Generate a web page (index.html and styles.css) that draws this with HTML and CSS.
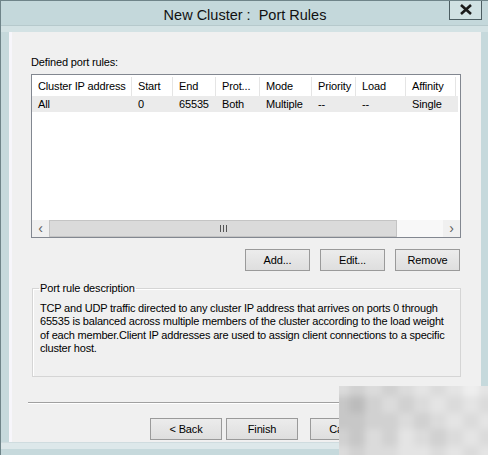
FILE: index.html
```html
<!DOCTYPE html>
<html lang="en">
<head>
  <meta charset="UTF-8">
  <title>New Cluster : Port Rules</title>
  <link rel="stylesheet" href="styles.css">
</head>
<body>
  <div class="window">
    <div class="titlebar">
      <div class="title">New Cluster :&nbsp; Port Rules</div>
      <div class="close">
        <svg width="14" height="11" viewBox="0 0 14 11"><path d="M2 1 L12 10 M12 1 L2 10" stroke="#1a1a1a" stroke-width="2.6"/></svg>
      </div>
    </div>
    <div class="band"></div>

    <div class="client">
      <div class="label">Defined port rules:</div>

      <div class="listview">
        <div class="lv-head">
          <div class="cell">Cluster IP address</div>
          <div class="cell">Start</div>
          <div class="cell">End</div>
          <div class="cell">Prot...</div>
          <div class="cell">Mode</div>
          <div class="cell">Priority</div>
          <div class="cell">Load</div>
          <div class="cell">Affinity</div>
        </div>
        <div class="lv-row selected">
          <div class="cell">All</div>
          <div class="cell">0</div>
          <div class="cell">65535</div>
          <div class="cell">Both</div>
          <div class="cell">Multiple</div>
          <div class="cell">--</div>
          <div class="cell">--</div>
          <div class="cell">Single</div>
        </div>
        <div class="lv-fill"></div>
        <div class="hscroll">
          <div class="arrow">&lsaquo;</div>
          <div class="thumb">
            <svg width="7" height="7" viewBox="0 0 7 7"><path d="M0.5 0 V7 M3.5 0 V7 M6.5 0 V7" stroke="#555" stroke-width="1"/></svg>
          </div>
          <div class="track"></div>
          <div class="arrow">&rsaquo;</div>
        </div>
      </div>

      <div class="btn-row">
        <button class="btn">Add...</button>
        <button class="btn">Edit...</button>
        <button class="btn">Remove</button>
      </div>

      <fieldset class="group">
        <legend>Port rule description</legend>
        <p class="desc">TCP and UDP traffic directed to any cluster IP address that arrives on ports 0 through<br>
        65535 is balanced across multiple members of the cluster according to the load weight<br>
        of each member.Client IP addresses are used to assign client connections to a specific<br>
        cluster host.</p>
      </fieldset>

      <div class="separator"></div>

      <div class="wizard-btns">
        <button class="btn wide">&lt; Back</button>
        <button class="btn wide">Finish</button>
        <button class="btn wide cancel">Cancel</button>
      </div>
    </div>
    <div class="bottom-band"></div>

    <!-- blurred stamp in the corner -->
    <div class="watermark">
      <div class="wm-grid">
        <i class="s4"></i><i class="s3"></i><i class="s4"></i><i class="s3"></i><i class="s4"></i><i class="s5"></i><i class="s4"></i><i class="s5"></i><i class="s6"></i><i class="s5"></i>
        <i class="s2"></i><i class="s1"></i><i class="s3"></i><i class="s4"></i><i class="s3"></i><i class="s4"></i><i class="s5"></i><i class="s4"></i><i class="s5"></i><i class="s4"></i>
        <i class="s2"></i><i class="s2"></i><i class="s3"></i><i class="s3"></i><i class="s4"></i><i class="s3"></i><i class="s4"></i><i class="s5"></i><i class="s4"></i><i class="s5"></i>
        <i class="s3"></i><i class="s2"></i><i class="s4"></i><i class="s3"></i><i class="s5"></i><i class="s4"></i><i class="s3"></i><i class="s4"></i><i class="s5"></i><i class="s4"></i>
        <i class="s4"></i><i class="s3"></i><i class="s4"></i><i class="s4"></i><i class="s5"></i><i class="s5"></i><i class="s4"></i><i class="s5"></i><i class="s4"></i><i class="s5"></i>
      </div>
    </div>
  </div>
</body>
</html>
```

FILE: styles.css
```css
body { margin: 0; font-family: "Liberation Sans", Arial, sans-serif; font-size: 11px; color: #000; letter-spacing: -0.15px; }

.window { position: relative; width: 488px; height: 455px; background: #c6d9dc; border-left: 1px solid #6f8489; border-top: 1px solid #6f8489; box-sizing: border-box; overflow: hidden; display: flex; flex-direction: column; }

.titlebar { display: flex; height: 24px; background: #c4d8db; }
.title { flex: 1; padding-left: 40px; text-align: center; font-size: 14.5px; line-height: 28px; color: #111; letter-spacing: 0; }
.close { width: 33px; height: 20px; margin-right: 6px; margin-top: -1px; background: #d0e1e3; border: 1px solid #4c5d62; border-top: none; box-sizing: border-box; display: flex; align-items: center; justify-content: center; }

.band { height: 6px; background: #d3e2e4; border-top: 1px solid #b6c9cc; }

.client { height: 410px; margin: 0 7px 0 8px; background: #f0f0f0; border-left: 3px solid #f7f6fb; box-sizing: border-box; padding: 23px 20px 0 19px; }

.label { line-height: 14px; margin-bottom: 5px; }

.listview { height: 164px; border: 1px solid #828790; background: #fff; display: flex; flex-direction: column; padding-top: 2px; box-sizing: border-box; }
.lv-head, .lv-row { display: grid; grid-template-columns: 100px 41px 43px 44px 52px 44px 50px 50px; }
.lv-head { height: 19px; line-height: 19px; }
.lv-head .cell { border-right: 1px solid #e5e5e5; }
.lv-row { height: 16px; line-height: 16px; }
.lv-row.selected { background: #ebebeb; margin-right: 2px; }
.cell { padding-left: 6px; white-space: nowrap; overflow: hidden; }
.lv-fill { flex: 1; }

.hscroll { height: 17px; display: flex; background: #f0f0f0; }
.arrow { width: 17px; text-align: center; font-size: 14px; line-height: 16px; color: #606060; }
.thumb { width: 348px; background: #dadada; border: 1px solid #c4c4c4; box-sizing: border-box; display: flex; align-items: center; justify-content: center; }
.track { flex: 1; background: #f8f8f8; }

.btn { font-family: inherit; font-size: 11px; letter-spacing: -0.15px; color: #000; height: 22px; background: linear-gradient(#ececec, #dedede); border: 1px solid #9a9a9a; padding: 0; }
.btn-row { display: flex; justify-content: flex-end; gap: 10px; margin: 11px 1px 0 0; }
.btn-row .btn { width: 65px; }

.group { margin: 10px 0 0 1px; padding: 7px 7px 0 7px; height: 96px; box-sizing: border-box; border: 1px solid #d5d5d5; box-shadow: inset 1px 1px #fff; }
.group legend { padding: 0 1px; margin-left: -1px; line-height: 14px; }
.desc { margin: 0; line-height: 13.3px; white-space: nowrap; letter-spacing: -0.2px; }

.separator { height: 1px; background: #a0a0a0; border-bottom: 1px solid #fff; margin: 25px -8px 0 -3px; }

.wizard-btns { display: flex; gap: 4px; margin: 14px 0 0 119px; }
.wizard-btns .btn.wide { width: 72px; }
.wizard-btns .cancel { margin-left: 8px; }

.bottom-band { height: 6px; background: #dde8ea; border-top: 1px solid #cfdcdf; }

.watermark { position: absolute; left: 338px; top: 385px; width: 150px; height: 70px; overflow: hidden; background: #d8d8d8; }
.wm-grid { margin: -6px; height: 82px; display: grid; grid-template-columns: repeat(10, 1fr); grid-template-rows: repeat(5, 1fr); filter: blur(3px); }
.wm-grid i { display: block; }
.s1 { background: #bcbcbc; }
.s2 { background: #c7c7c7; }
.s3 { background: #d1d1d1; }
.s4 { background: #dbdbdb; }
.s5 { background: #e4e4e4; }
.s6 { background: #eeeeee; }
```
